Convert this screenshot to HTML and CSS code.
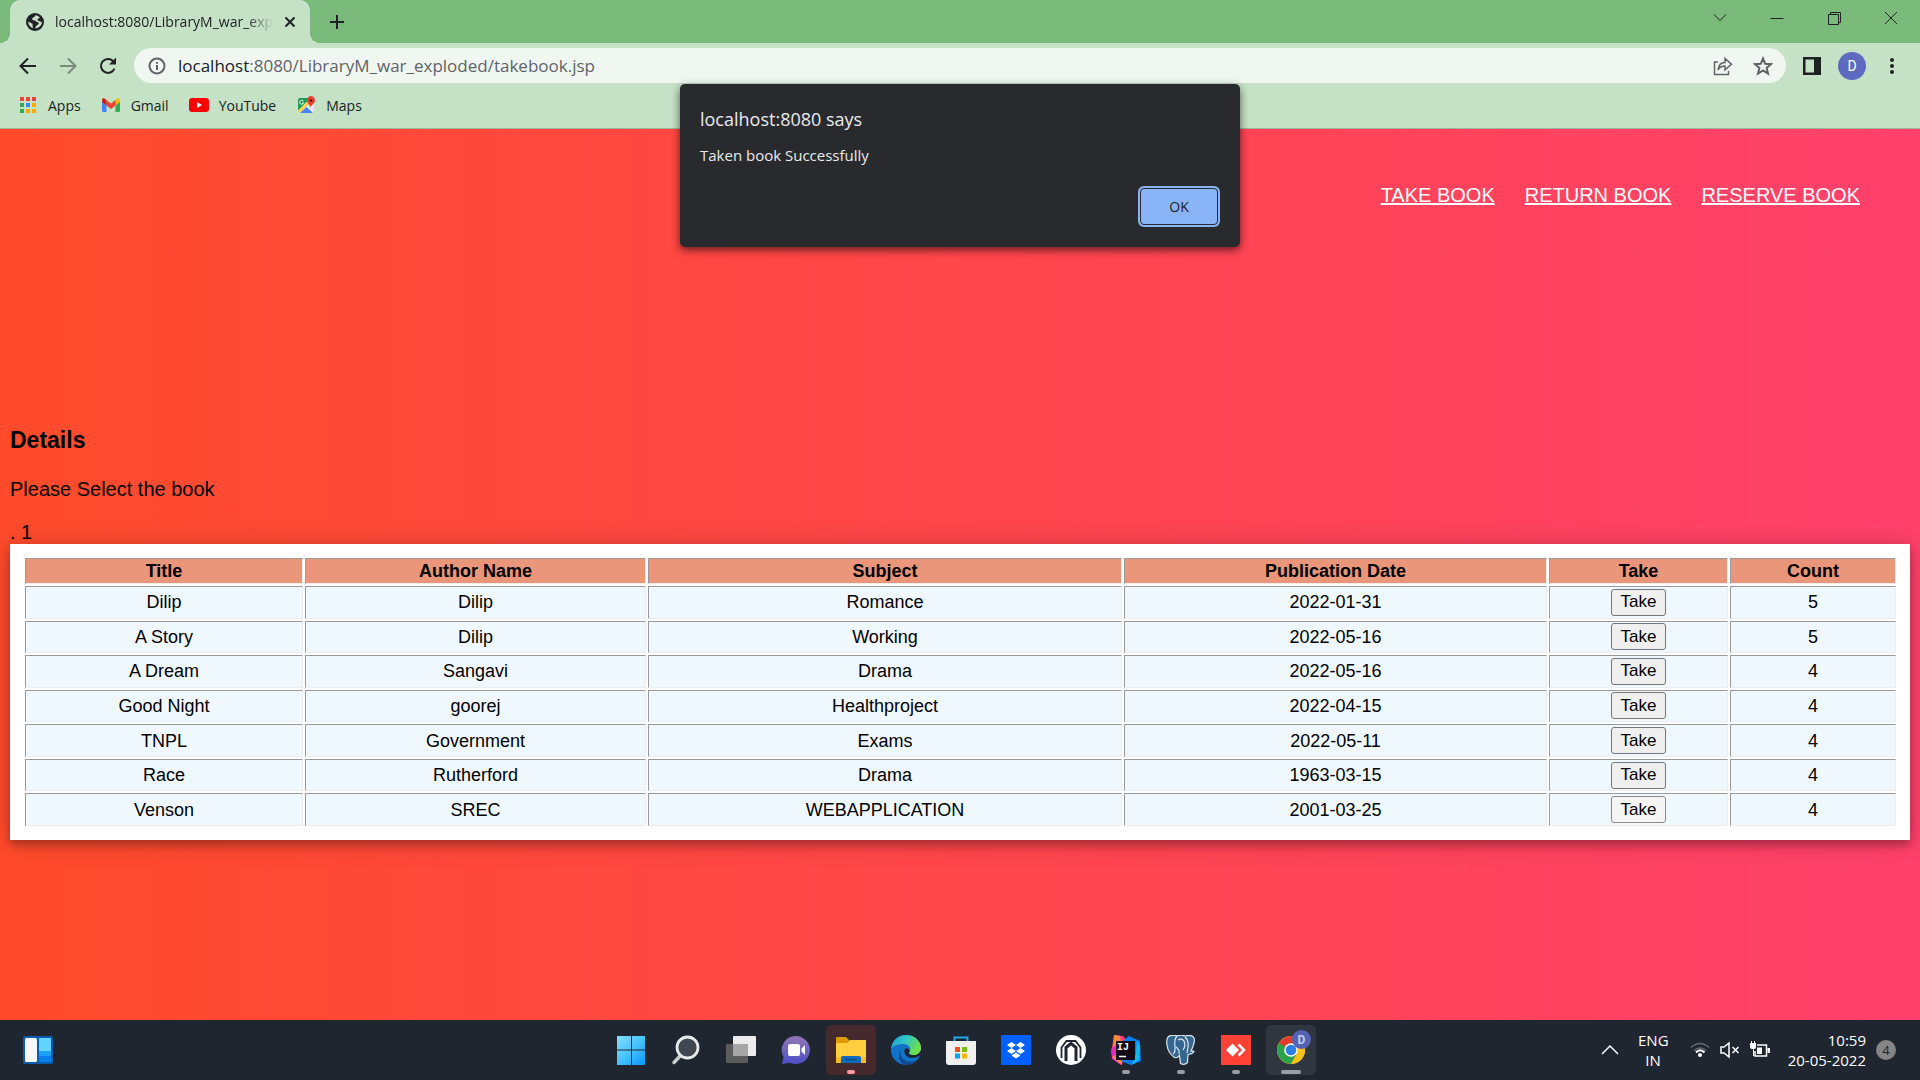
FILE: index.html
```html
<!DOCTYPE html>
<html lang="en">
<head>
<meta charset="utf-8">
<title>Library - Take book</title>
<link rel="stylesheet" href="styles.css">
</head>
<body>
<div class="browser">
  <header class="tabstrip">
    <div class="tab">
      <svg class="i18" viewBox="0 0 18 18"><circle cx="9" cy="9" r="9" fill="#202124"/><path d="M9.5 2.2c-1 1-.6 1.6-2.200 2.300-1.400.6-1.300 1.800-.6 2.500.9.7 2.900.3 3.300 1.300.3 1 2.600.6 2.800 2-.1 1.600-2.600 1.600-3.800 4.900 4-.1 6.900-3 6.900-6.300-1.400.300-1.700-.9-3.100-.9-1.100 0-1.700-1.700-.8-2.300.7-.5 1.400-.4 2-.700-1-1.700-2.700-2.700-4.500-2.800zM2.300 8.500c-.2 3 1.500 5.600 4.500 6.700.3-1.600-.500-2.500-.3-3.500.2-.8 0-1.400-1.100-1.500-.9-.1-1.600-1.200-3.100-1.700z" fill="#c5e1c6"/></svg>
      <span class="tab-title">localhost:8080/LibraryM_war_exp</span>
      <button class="tool tab-close" aria-label="Close tab"><svg class="i12" viewBox="0 0 12 12"><path d="M1.500 1.500l9 9M10.500 1.500l-9 9" class="ink2"/></svg></button>
    </div>
    <button class="tool new-tab" aria-label="New tab"><svg class="i16" viewBox="0 0 16 16"><path d="M8 1v14M1 8h14" class="ink2"/></svg></button>
    <div class="window-buttons">
      <button class="tool" aria-label="Search tabs"><svg class="i16" viewBox="0 0 16 16"><path d="M2 4.500l6 6 6-6" class="ink1"/></svg></button>
      <button class="tool" aria-label="Minimize"><svg class="i16" viewBox="0 0 16 16"><path d="M1.500 8.500h13" class="ink1"/></svg></button>
      <button class="tool" aria-label="Restore"><svg class="i16" viewBox="0 0 16 16"><path d="M2.500 4.500h10v10h-10zM4.500 4.500v-2h10v10h-2" class="ink1"/></svg></button>
      <button class="tool" aria-label="Close"><svg class="i16" viewBox="0 0 16 16"><path d="M2 2l12 12M14 2L2 14" class="ink1"/></svg></button>
    </div>
  </header>
  <div class="toolbar">
    <div class="history">
      <button class="tool" aria-label="Back"><svg class="i20" viewBox="0 0 20 20"><path d="M18 10H3M10 2.500L2.500 10l7.500 7.500" class="ink2"/></svg></button>
      <button class="tool faded" aria-label="Forward"><svg class="i20" viewBox="0 0 20 20"><path d="M2 10h15M10 2.500l7.500 7.500-7.500 7.500" class="ink2"/></svg></button>
      <button class="tool" aria-label="Reload"><svg class="i20" viewBox="0 0 20 20"><path d="M16.500 12.500A7 7 0 1 1 15 5l1 1" class="ink2"/><path d="M18 1.500v7h-7z" fill="#202124"/></svg></button>
    </div>
    <div class="omnibox">
      <svg class="i18" viewBox="0 0 18 18"><circle cx="9" cy="9" r="7.500" class="gray2"/><path d="M9 8v5M9 5v1.800" class="gray2"/></svg>
      <div class="url"><b>localhost</b>:8080/LibraryM_war_exploded/takebook.jsp</div>
      <button class="tool" aria-label="Share"><svg class="i20" viewBox="0 0 20 20"><path d="M5 6H1.500v12.500h14V15M5 14c.500-5 3-7.500 7-7.500V2.500l6.500 5.700-6.500 5.600V10c-3 0-5.500 1-7 4z" class="gray1"/></svg></button>
      <button class="tool" aria-label="Bookmark"><svg class="i20" viewBox="0 0 20 20"><path d="M10 2.500l2.200 5.300 5.800.4-4.400 3.700 1.400 5.600-5-3.100-5 3.100 1.400-5.600L2 8.200l5.800-.4z" class="gray2"/></svg></button>
    </div>
    <button class="tool" aria-label="Side panel"><svg class="i20" viewBox="0 0 20 20"><path d="M1 1h18v18H1zM3.500 3.500v13H12v-13z" fill="#202124" fill-rule="evenodd"/></svg></button>
    <button class="tool profile" aria-label="Profile">D</button>
    <button class="tool" aria-label="Menu"><svg class="i20" viewBox="0 0 20 20"><g fill="#202124"><circle cx="10" cy="4" r="2"/><circle cx="10" cy="10" r="2"/><circle cx="10" cy="16" r="2"/></g></svg></button>
  </div>
  <nav class="bookmarks">
    <a href="#apps"><svg class="i20" viewBox="0 0 20 20"><path d="M2 2h4v4H2zM8 2h4v4H8zM14 2h4v4h-4z" fill="#ea4335"/><path d="M2 8h4v4H2zM2 14h4v4H2z" fill="#34a853"/><path d="M8 8h4v4H8z" fill="#4285f4"/><path d="M14 8h4v4h-4zM8 14h4v4H8zM14 14h4v4h-4z" fill="#fbab05"/></svg>Apps</a>
    <a href="#gmail"><svg class="i20" viewBox="0 0 20 20"><path d="M1 6l4.500 3.500V17H2.500Q1 17 1 15.500z" fill="#4285f4"/><path d="M19 6l-4.500 3.500V17h3q1.500 0 1.500-1.500z" fill="#34a853"/><path d="M14.500 5l2-1.500Q19 2.500 19 5v2l-4.500 3.500z" fill="#fbbc04"/><path d="M5.500 5L10 8.500 14.500 5v5.500L10 14l-4.500-3.500z" fill="#ea4335"/><path d="M5.500 5l-2-1.500Q1 2.500 1 5v2l4.500 3.500z" fill="#c5221f"/></svg>Gmail</a>
    <a href="#youtube"><svg class="i20" viewBox="0 0 20 20"><rect y="3" width="20" height="14" rx="3" fill="#f00"/><path d="M8 7v6l5-3z" fill="#fff"/></svg>YouTube</a>
    <a href="#maps"><svg class="i20" viewBox="0 0 20 20"><rect x="2" y="3" width="16" height="15" rx="2" fill="#e8e8e8"/><path d="M2 5q0-2 2-2h10L2 16z" fill="#1e9b57"/><path d="M2 15.500L14 4l2 2L4 18Q2 18 2 15.500z" fill="#ffd04b"/><path d="M4 18l6.500-6 6.500 6z" fill="#4285f4"/><path d="M7.500 6.500a2 2 0 1 0 0 1.500H6" fill="none" stroke="#fff"/><path d="M14.500 13c0-3-3.500-4-3.500-7.500a3.500 4 0 0 1 8 0c0 3.500-4.500 4.500-4.500 7.500z" fill="#ea4335"/><circle cx="15" cy="5.500" r="1.500" fill="#811411"/></svg>Maps</a>
  </nav>

  <main class="page">
    <nav class="site-nav">
      <a href="#take">TAKE BOOK</a>
      <a href="#return">RETURN BOOK</a>
      <a href="#reserve">RESERVE BOOK</a>
    </nav>
    <h3>Details</h3>
    <p>Please Select the book</p>
    <div>. 1</div>
    <table class="books">
      <colgroup><col class="c-title"><col class="c-author"><col class="c-subject"><col class="c-date"><col class="c-take"><col class="c-count"></colgroup>
      <thead>
        <tr><th>Title</th><th>Author Name</th><th>Subject</th><th>Publication Date</th><th>Take</th><th>Count</th></tr>
      </thead>
      <tbody>
        <tr><td>Dilip</td><td>Dilip</td><td>Romance</td><td>2022-01-31</td><td><button class="take">Take</button></td><td>5</td></tr>
        <tr><td>A Story</td><td>Dilip</td><td>Working</td><td>2022-05-16</td><td><button class="take">Take</button></td><td>5</td></tr>
        <tr><td>A Dream</td><td>Sangavi</td><td>Drama</td><td>2022-05-16</td><td><button class="take">Take</button></td><td>4</td></tr>
        <tr><td>Good Night</td><td>goorej</td><td>Healthproject</td><td>2022-04-15</td><td><button class="take">Take</button></td><td>4</td></tr>
        <tr><td>TNPL</td><td>Government</td><td>Exams</td><td>2022-05-11</td><td><button class="take">Take</button></td><td>4</td></tr>
        <tr><td>Race</td><td>Rutherford</td><td>Drama</td><td>1963-03-15</td><td><button class="take">Take</button></td><td>4</td></tr>
        <tr><td>Venson</td><td>SREC</td><td>WEBAPPLICATION</td><td>2001-03-25</td><td><button class="take hovered">Take</button></td><td>4</td></tr>
      </tbody>
    </table>
  </main>

  <div class="dialog" role="alertdialog" aria-labelledby="dialog-title" aria-describedby="dialog-text">
    <div class="dialog-title" id="dialog-title">localhost:8080 says</div>
    <div class="dialog-text" id="dialog-text">Taken book Successfully</div>
    <button class="dialog-ok">OK</button>
  </div>
</div>

<footer class="taskbar">
  <div class="task-left">
    <button class="task" aria-label="Widgets"><svg class="i30" viewBox="0 0 30 30"><rect y="1" width="30" height="28" rx="2" fill="#0a5cad"/><rect x="2" y="3" width="12" height="24" rx="1.500" fill="#f5f7fa"/><path d="M16 3h12v13H16z" fill="#62d3fb"/><path d="M16 16h12v5H16z" fill="#1ba1f5"/><path d="M16 21h12v6H16z" fill="#0481ea"/></svg></button>
  </div>
  <div class="task-apps">
    <button class="task" aria-label="Start"><svg class="i30" viewBox="0 0 30 30"><defs><linearGradient id="win" x1="0" y1="0" x2="30" y2="30" gradientUnits="userSpaceOnUse"><stop stop-color="#8be0ff"/><stop offset=".5" stop-color="#48c4fb"/><stop offset="1" stop-color="#0593fc"/></linearGradient></defs><path d="M1 1h14v13.500H1zM16 1h13v13.500H16zM1 15.500h14V30H1zM16 15.500h13V30H16z" fill="url(#win)"/></svg></button>
    <button class="task" aria-label="Search"><svg class="i30" viewBox="0 0 30 30"><path d="M10 20l-7 7.500" stroke="#c9cbcd" stroke-width="3.500" stroke-linecap="round"/><circle cx="16.500" cy="12.500" r="10.500" fill="#414751" stroke="#e8e9ea" stroke-width="2.800"/></svg></button>
    <button class="task" aria-label="Task view"><svg class="i30" viewBox="0 0 30 30"><rect y="9" width="22" height="19" rx="1" fill="#5c5c5c"/><rect x="7" y="1" width="23" height="20" rx="1" fill="#ececec"/><path d="M7 9h15v12H7z" fill="#a6a6a6"/></svg></button>
    <button class="task" aria-label="Chat"><svg class="i30" viewBox="0 0 30 30"><defs><linearGradient id="chat" x1="0" y1="0" x2="0" y2="1"><stop stop-color="#9377b5"/><stop offset="1" stop-color="#4d50c9"/></linearGradient></defs><path d="M15 1a14 14 0 1 1-6 26.700L1 29l1.600-7A14 14 0 0 1 15 1z" fill="url(#chat)"/><rect x="7" y="9" width="12" height="12" rx="2" fill="#fff"/><path d="M20.500 13.500L24 10v10l-3.500-3.500z" fill="#fff"/></svg></button>
    <button class="task attention" aria-label="File Explorer"><svg class="i30" viewBox="0 0 30 30"><path d="M0 3q0-1 1-1h9l3 3v6H0z" fill="#dc9a03"/><path d="M0 8h11l3-3h16v23H0z" fill="#ffcf3f"/><path d="M0 22h30v6H0z" fill="#f8bd26"/><path d="M5 28v-5q0-2 2-2h16q2 0 2 2v5z" fill="#0d6cbd"/><path d="M9 24.500h12" stroke="#064a86" stroke-width="1.500"/></svg><i class="mark"></i></button>
    <button class="task" aria-label="Edge"><svg class="i30" viewBox="0 0 30 30"><defs><linearGradient id="edge" x1="0" y1="0" x2="1" y2=".4"><stop stop-color="#1f9de0"/><stop offset=".5" stop-color="#31c5c5"/><stop offset="1" stop-color="#6ee04b"/></linearGradient></defs><circle cx="15" cy="15" r="15" fill="#1272c9"/><path d="M.2 14C1 5 7.500 0 15 0c9 0 15 6.500 15 12.500 0 5-3.500 7.500-7.500 7.500-4 0-5.500-1.500-4-3.500 2-3.500-.5-7.500-6-7.500C6 9 1 11.500.2 14z" fill="url(#edge)"/><path d="M11 13c-3.500 4-2 12 6.500 13.500 4.500.6 8-.5 10.500-4C25 28 20 30.500 15 30 8 29.300 5.500 19 11 13z" fill="#104b91"/><path d="M14.500 13.500c-1.500 1-2 6 2.500 8.500 4 2 9.500.5 11.500-1.500l2 4V13c-1 5-4 7-8 7-4 0-5.500-1.500-4-3.500 1-1.500-1.500-4-4-3z" fill="#1f2630"/><path d="M22.500 20c4 0 7.500-2.500 7.500-7.500l-1-3-4 9z" fill="#6ee04b"/></svg></button>
    <button class="task" aria-label="Microsoft Store"><svg class="i30" viewBox="0 0 30 30"><path d="M8.500 7V2.500h13V7" fill="none" stroke="#20a8e8" stroke-width="2"/><path d="M0 6h30v21q0 3-3 3H3q-3 0-3-3z" fill="#f0f0f0"/><path d="M9 12h5v5H9z" fill="#f1511b"/><path d="M16 12h5v5h-5z" fill="#80bb03"/><path d="M9 18.500h5v5H9z" fill="#05a5ef"/><path d="M16 18.500h5v5h-5z" fill="#fbb70a"/></svg></button>
    <button class="task" aria-label="Dropbox"><svg class="i30" viewBox="0 0 30 30"><path d="M0 0h30v30H0z" fill="#0061fe"/><path d="M10.500 7l4.500 3-4.500 3L6 10zM19.500 7l4.500 3-4.500 3-4.500-3zM10.500 13l4.500 3-4.500 3L6 16zM19.500 13l4.500 3-4.500 3-4.500-3zM15 17.500l4.500 3L15 23.500l-4.500-3z" fill="#fff"/></svg></button>
    <button class="task" aria-label="Desktop"><svg class="i30" viewBox="0 0 30 30"><circle cx="15" cy="15" r="15" fill="#fff"/><path d="M5.500 23V12.500l5-6.500h9l5 6.500V23" fill="none" stroke="#1f2630" stroke-width="1.800"/><path d="M10 26V12.500l5-4 5 4V26" fill="none" stroke="#1f2630" stroke-width="3"/></svg></button>
    <button class="task" aria-label="IntelliJ IDEA"><svg class="i30" viewBox="0 0 30 30"><path d="M3 0l9 1 6 7-12 12-6-1z" fill="#fc3d83"/><path d="M0 14l8-5 8 14-6 7-9-6z" fill="#e22bbb"/><path d="M1 22l9-5 1 13z" fill="#fc8c3d"/><path d="M3 0l6 1 1 6-8 5z" fill="#fd8b33"/><path d="M13 5l5-4 11 5 1 20-10 4-10-4z" fill="#0a7df0"/><path d="M26 5l3 6-1 14-7 5 4-12z" fill="#12b9f0"/><path d="M5 6h19v19H5z" fill="#120a14"/><text x="6" y="15" class="ij">IJ</text><path d="M8 21.500h7" stroke="#fff" stroke-width="1.500"/></svg><i class="mark"></i></button>
    <button class="task" aria-label="pgAdmin"><svg class="i30" viewBox="0 0 30 30"><path d="M2 2q4-3 9-1 4-1.500 8 0 7-2 9 2 1.500 4-3 13 2-.5 3 .5-2 3-6 3l-.5 8q-3 3-7 1l-1-8q-2 3-5 2Q2 18 1 10 0 5 2 2z" fill="#336791" stroke="#dfe7ee" stroke-width="1.200"/><path d="M11 1Q8 4 9 12q.500 5-2 7M12 5q4-2 6 1 2 5-1 9M19 2q4 4 3 10l-1 6M10 12q4 3 3 7" fill="none" stroke="#dfe7ee" stroke-width="1.200"/></svg><i class="mark"></i></button>
    <button class="task" aria-label="AnyDesk"><svg class="i30" viewBox="0 0 30 30"><path d="M0 0h30v30H0z" fill="#ff4236"/><path d="M11.500 8.500L18 15l-6.500 6.500L5 15z" fill="#fff"/><path d="M17.500 9.500L23 15l-5.500 5.500" fill="none" stroke="#fff" stroke-width="2.500"/></svg><i class="mark"></i></button>
    <button class="task active" aria-label="Google Chrome"><svg class="i40" viewBox="0 0 40 40"><circle cx="20" cy="20" r="14" fill="#fbc116"/><path d="M20 20L7.900 13A14 14 0 0 0 20 34l6-10.500z" fill="#2da24c"/><path d="M20 20h-6.500L7.900 13A14 14 0 0 1 32.100 13H20z" fill="#e33b2e"/><path d="M7.900 13l5 9 7-2z" fill="#2da24c"/><path d="M32.100 13H20v7l6 3.500L20 34A14 14 0 0 0 32.100 13z" fill="#fbc116"/><circle cx="20" cy="20" r="6.800" fill="#fff"/><circle cx="20" cy="20" r="5.300" fill="#2f7de9"/><circle cx="30.500" cy="9.500" r="9.500" fill="#5363b5"/><text x="30.500" y="14" class="chrome-d">D</text></svg><i class="mark wide"></i></button>
  </div>
  <div class="tray">
    <button class="tool" aria-label="Show hidden icons"><svg class="i20" viewBox="0 0 20 20"><path d="M2 14l8-8 8 8" class="white1"/></svg></button>
    <div class="lang">ENG<br>IN</div>
    <div class="status">
      <svg class="i20" viewBox="0 0 20 20"><path d="M1 7.500q9-8 18 0M4 10.500q6-5 12 0" fill="none" stroke="#666c74" stroke-width="1.500"/><path d="M6 12.500q4-4.500 8.500 0" fill="none" stroke="#fff" stroke-width="2"/><circle cx="10" cy="15" r="2" fill="#fff"/></svg>
      <svg class="i20" viewBox="0 0 20 20"><path d="M1 7h3l5-4v14l-5-4H1zM12.500 7l6 6M18.500 7l-6 6" fill="none" stroke="#fff" stroke-width="1.500"/></svg>
      <svg class="i20" viewBox="0 0 20 20"><path d="M7 5h9.500v11H5v-5" fill="none" stroke="#fff" stroke-width="1.500"/><path d="M0 3h6v4q0 2-2 2v7H3V9Q0 9 0 7zM1 1h1v2H1zM4 1h1v2H4zM7 7.500h5v6.500H7zM17.500 8H20v5h-2.500z" fill="#fff"/></svg>
    </div>
    <div class="clock">10:59<br>20-05-2022</div>
    <div class="count">4</div>
  </div>
</footer>
</body>
</html>
```
FILE: styles.css
```css
* { box-sizing: border-box; }
body {
  margin: 0;
  min-height: 100vh;
  display: flex;
  flex-direction: column;
  font-family: "Open Sans", "Noto Sans", sans-serif;
  color: #202124;
}
svg { display: block; flex: none; }
.i12 { width: 12px; height: 12px; }
.i16 { width: 16px; height: 16px; }
.i18 { width: 18px; height: 18px; }
.i20 { width: 20px; height: 20px; }
.i30 { width: 30px; height: 30px; }
.i40 { width: 40px; height: 40px; }
.ink1, .ink2, .gray1, .gray2, .white1 { fill: none; stroke: #202124; stroke-width: 1; }
.ink2 { stroke-width: 2; }
.gray1, .gray2 { stroke: #5f6368; stroke-width: 2; }
.gray1 { stroke-width: 1.5; }
.white1 { stroke: #fff; stroke-width: 1.5; }
.tool {
  padding: 0;
  border: 0;
  background: none;
  color: inherit;
  font: inherit;
}

/* browser window */
.browser { position: relative; flex: 1; display: flex; flex-direction: column; }
.tabstrip {
  display: flex;
  align-items: center;
  height: 43px;
  padding: 0 21px 0 10px;
  background: #7abb7c;
}
.tab {
  position: relative;
  display: flex;
  align-items: center;
  gap: 11px;
  width: 300px;
  height: 43px;
  padding: 0 14px 0 16px;
  border-radius: 10px 10px 0 0;
  background: #c5e1c6;
}
.tab::before, .tab::after {
  content: "";
  position: absolute;
  bottom: 0;
  width: 10px;
  height: 10px;
}
.tab::before { left: -10px; background: radial-gradient(circle at 0 0, transparent 10px, #c5e1c6 10px); }
.tab::after { right: -10px; background: radial-gradient(circle at 100% 0, transparent 10px, #c5e1c6 10px); }
.tab-title {
  flex: 1;
  white-space: nowrap;
  font-size: 14px;
  -webkit-mask-image: linear-gradient(to right, #000 88%, transparent);
  mask-image: linear-gradient(to right, #000 88%, transparent);
}
.new-tab { margin-left: 19px; }
.window-buttons { display: flex; gap: 41px; margin-left: auto; align-self: flex-start; padding-top: 10px; }
.toolbar {
  display: flex;
  align-items: center;
  gap: 16px;
  height: 45px;
  padding: 0 18px;
  background: #c5e1c6;
}
.history { display: flex; gap: 20px; }
.faded { opacity: .45; }
.omnibox {
  flex: 1;
  display: flex;
  align-items: center;
  gap: 20px;
  height: 35px;
  padding: 0 13px 0 14px;
  border-radius: 18px;
  background: #f0f7f1;
}
.url { flex: 1; margin-left: -8px; font-size: 17px; color: #5f6368; white-space: nowrap; }
.url b { font-weight: 400; color: #202124; }
.profile {
  width: 28px;
  height: 28px;
  border-radius: 50%;
  background: #5c6bc0;
  color: #fff;
  font: 14px Roboto, sans-serif;
}
.bookmarks {
  display: flex;
  gap: 20px;
  height: 41px;
  padding: 0 18px 6px;
  border-bottom: 1px solid #9db49f;
  background: #c5e1c6;
  font-size: 14px;
}
.bookmarks a { display: flex; align-items: center; gap: 10px; color: inherit; text-decoration: none; }

/* library page */
.page {
  flex: 1;
  padding: 55px 10px 20px;
  background: linear-gradient(to right, #ff4b2b, #ff416c);
  color: #000;
  font: 20px/23px "Liberation Sans", Arial, sans-serif;
}
.site-nav { display: flex; justify-content: flex-end; gap: 30px; padding-right: 50px; }
.site-nav a { color: #fff; text-decoration-thickness: 2px; }
.page h3 { margin: 220px 0 24px; font-size: 23px; line-height: 27px; }
.page p { margin: 0 0 20px; }
.books {
  width: 100%;
  height: 296px;
  padding: 12px 12px 12px 13px;
  table-layout: fixed;
  border-collapse: separate;
  border-spacing: 2px;
  background: #fff;
  box-shadow: 0 5px 8px rgba(0, 0, 0, .25), 0 2px 25px rgba(0, 0, 0, .2);
  font-size: 18px;
  line-height: 20px;
  text-align: center;
}
.c-title { width: 278px; }
.c-author { width: 341px; }
.c-subject { width: 474px; }
.c-date { width: 423px; }
.c-take { width: 179px; }
.c-count { width: 166px; }
.books th, .books td {
  padding: 1px;
  border: 1px solid;
  border-color: #9a9a9a #ededed #ededed #9a9a9a;
}
.books th { height: 26px; background: #e9967a; }
.books td { background: #f0f8ff; }
.take {
  display: block;
  margin: 0 auto;
  width: 55px;
  height: 27px;
  padding: 0;
  border: 1px solid #767676;
  border-radius: 3px;
  background: #efefef;
  color: #000;
  font: 17px "Liberation Sans", Arial, sans-serif;
}
.take.hovered { border-color: #8a8a8a; background: #f5f5f5; }

/* alert */
.dialog {
  position: absolute;
  top: 84px;
  left: 50%;
  width: 560px;
  margin-left: -280px;
  padding: 22px 20px 20px;
  display: flex;
  flex-direction: column;
  border-radius: 5px;
  background: #292a2d;
  box-shadow: 0 3px 8px rgba(0, 0, 0, .6);
  color: #e8eaed;
}
.dialog-title { font-size: 18px; line-height: 26px; }
.dialog-text { margin-top: 12px; font-size: 15px; line-height: 22px; }
.dialog-ok {
  align-self: flex-end;
  width: 78px;
  height: 37px;
  margin: 22px 2px 2px 0;
  border: 1px solid #292a2d;
  border-radius: 4px;
  background: #8ab4f8;
  box-shadow: 0 0 0 2px #8ab4f8;
  color: #202124;
  font: 14px "Open Sans", sans-serif;
}

/* taskbar */
.taskbar {
  display: grid;
  grid-template-columns: 1fr auto 1fr;
  align-items: center;
  height: 60px;
  background: #1f2630;
  color: #fff;
}
.task-left { padding-left: 13px; }
.task-apps { display: flex; gap: 5px; padding-left: 2px; }
.task {
  position: relative;
  display: grid;
  place-items: center;
  width: 50px;
  height: 50px;
  padding: 0;
  border: 0;
  border-radius: 5px;
  background: none;
}
.attention { background: #45292c; }
.active { background: #303640; }
.mark {
  position: absolute;
  bottom: 1px;
  left: 21px;
  width: 8px;
  height: 4px;
  border-radius: 2px;
  background: #9a9da1;
}
.attention .mark { background: #ff99a4; }
.wide { left: 15px; width: 20px; }
.ij { font: bold 10px "Liberation Mono", monospace; fill: #fff; }
.chrome-d { font: bold 12px Roboto, sans-serif; fill: #c5cbe9; text-anchor: middle; }
.tray {
  display: flex;
  align-items: center;
  justify-content: flex-end;
  padding-right: 24px;
  font-size: 15px;
  line-height: 20px;
}
.lang { width: 30px; margin: 0 22px 0 18px; text-align: center; }
.status { display: flex; gap: 10px; }
.clock { width: 86px; margin: 0 10px; text-align: right; white-space: nowrap; }
.count {
  width: 20px;
  height: 20px;
  border-radius: 50%;
  background: #858585;
  color: #1f2630;
  font-size: 13px;
  text-align: center;
}
```
